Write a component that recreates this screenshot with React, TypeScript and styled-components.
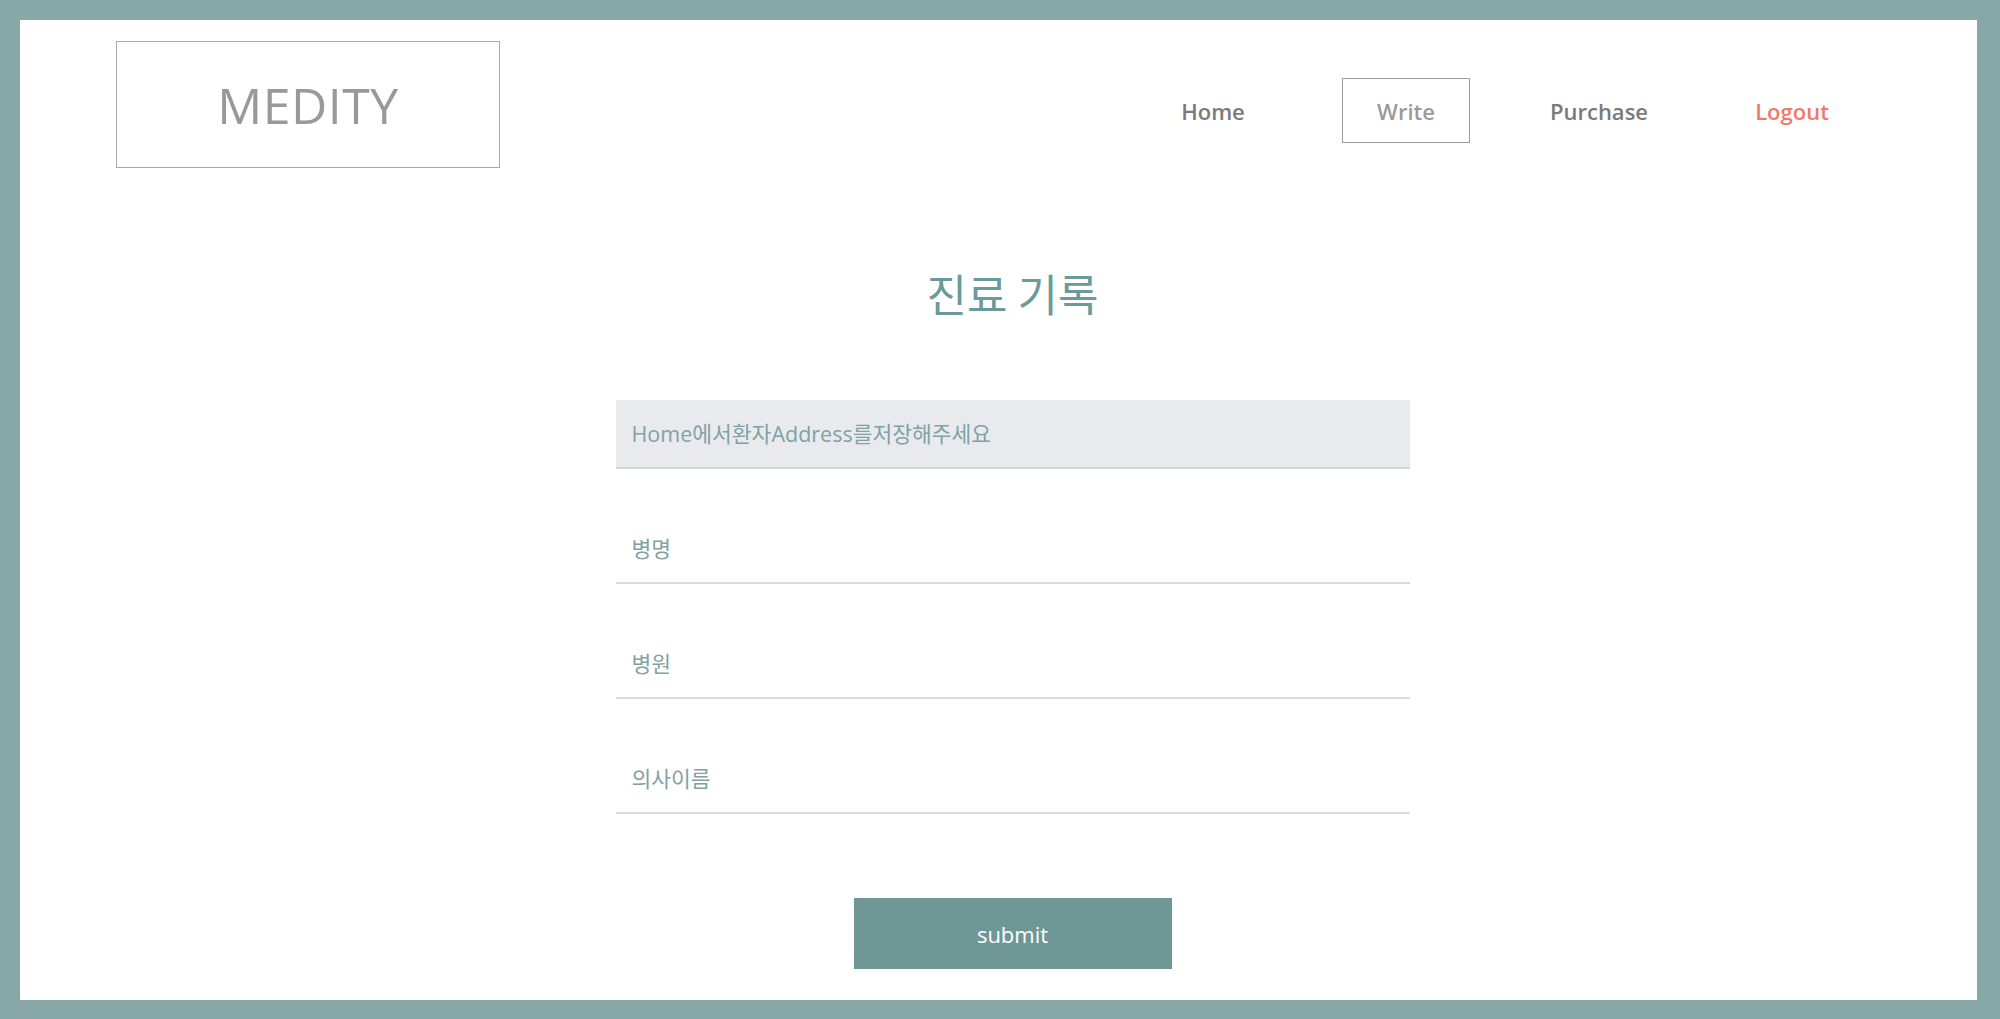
import React from "react";
import styled, { createGlobalStyle } from "styled-components";

const GlobalStyle = createGlobalStyle`
  html, body {
    margin: 0;
    padding: 0;
    background: #87a8a6;
  }
  body {
    font-family: "Open Sans", "Noto Sans CJK KR", sans-serif;
  }
  * {
    box-sizing: border-box;
  }
`;

const Frame = styled.div`
  min-height: 100vh;
  padding: 20px 23px 19px 20px;
  background: #87a8a6;
  display: flex;
`;

const Sheet = styled.div`
  flex: 1;
  background: #ffffff;
  display: flex;
  flex-direction: column;
`;

const Header = styled.header`
  display: flex;
  justify-content: space-between;
  align-items: flex-start;
  padding: 21px 121px 0 96px;
`;

const Logo = styled.div`
  width: 384px;
  height: 127px;
  border: 1px solid #a9a9a9;
  display: flex;
  align-items: center;
  justify-content: center;
  font-size: 50px;
  font-weight: 400;
  color: #999999;
  letter-spacing: 0.5px;
`;

const Nav = styled.nav`
  display: flex;
  gap: 65px;
  margin-top: 37px;
`;

const NavItem = styled.a<{ $active?: boolean; $accent?: boolean }>`
  width: 128px;
  height: 65px;
  display: flex;
  align-items: center;
  justify-content: center;
  font-size: 22px;
  font-weight: 600;
  text-decoration: none;
  cursor: pointer;
  border: 1px solid ${(p) => (p.$active ? "#9c9c9c" : "transparent")};
  color: ${(p) => (p.$accent ? "#ef7a68" : p.$active ? "#9a9a9a" : "#7a7a7a")};
`;

const Main = styled.main`
  display: flex;
  flex-direction: column;
  align-items: center;
  padding-left: 28px;
`;

const Title = styled.h1`
  margin: 95px 0 0;
  font-family: "Noto Sans CJK KR", "Open Sans", sans-serif;
  font-size: 44px;
  line-height: 60px;
  font-weight: 400;
  color: #6b9a9a;
`;

const Form = styled.form`
  width: 794px;
  margin-top: 77px;
  display: flex;
  flex-direction: column;
  align-items: center;
`;

const Fields = styled.div`
  width: 100%;
  display: flex;
  flex-direction: column;
  gap: 46px;
`;

const Field = styled.input<{ $filled?: boolean }>`
  width: 100%;
  height: 69px;
  border: none;
  border-bottom: 2px solid ${(p) => (p.$filled ? "#d4d6d9" : "#d9dbde")};
  padding: 0 16px;
  font-family: "Open Sans", "Noto Sans CJK KR", sans-serif;
  font-size: 21.5px;
  color: #6f9a9c;
  background: ${(p) => (p.$filled ? "#e9eaee" : "#ffffff")};
  outline: none;

  &::placeholder {
    color: #7fa2a4;
    opacity: 1;
  }
`;

const Submit = styled.button`
  margin-top: 84px;
  width: 318px;
  height: 71px;
  border: none;
  background: #6f9796;
  color: #ffffff;
  font-family: "Open Sans", sans-serif;
  font-size: 22px;
  font-weight: 400;
  cursor: pointer;
`;

export default function App() {
  return (
    <>
      <GlobalStyle />
      <Frame>
        <Sheet>
          <Header>
            <Logo>MEDITY</Logo>
            <Nav>
              <NavItem>Home</NavItem>
              <NavItem $active>Write</NavItem>
              <NavItem>Purchase</NavItem>
              <NavItem $accent>Logout</NavItem>
            </Nav>
          </Header>
          <Main>
            <Title>진료 기록</Title>
            <Form onSubmit={(e) => e.preventDefault()}>
              <Fields>
                <Field $filled readOnly placeholder="Home에서환자Address를저장해주세요" />
                <Field placeholder="병명" />
                <Field placeholder="병원" />
                <Field placeholder="의사이름" />
              </Fields>
              <Submit type="submit">submit</Submit>
            </Form>
          </Main>
        </Sheet>
      </Frame>
    </>
  );
}
